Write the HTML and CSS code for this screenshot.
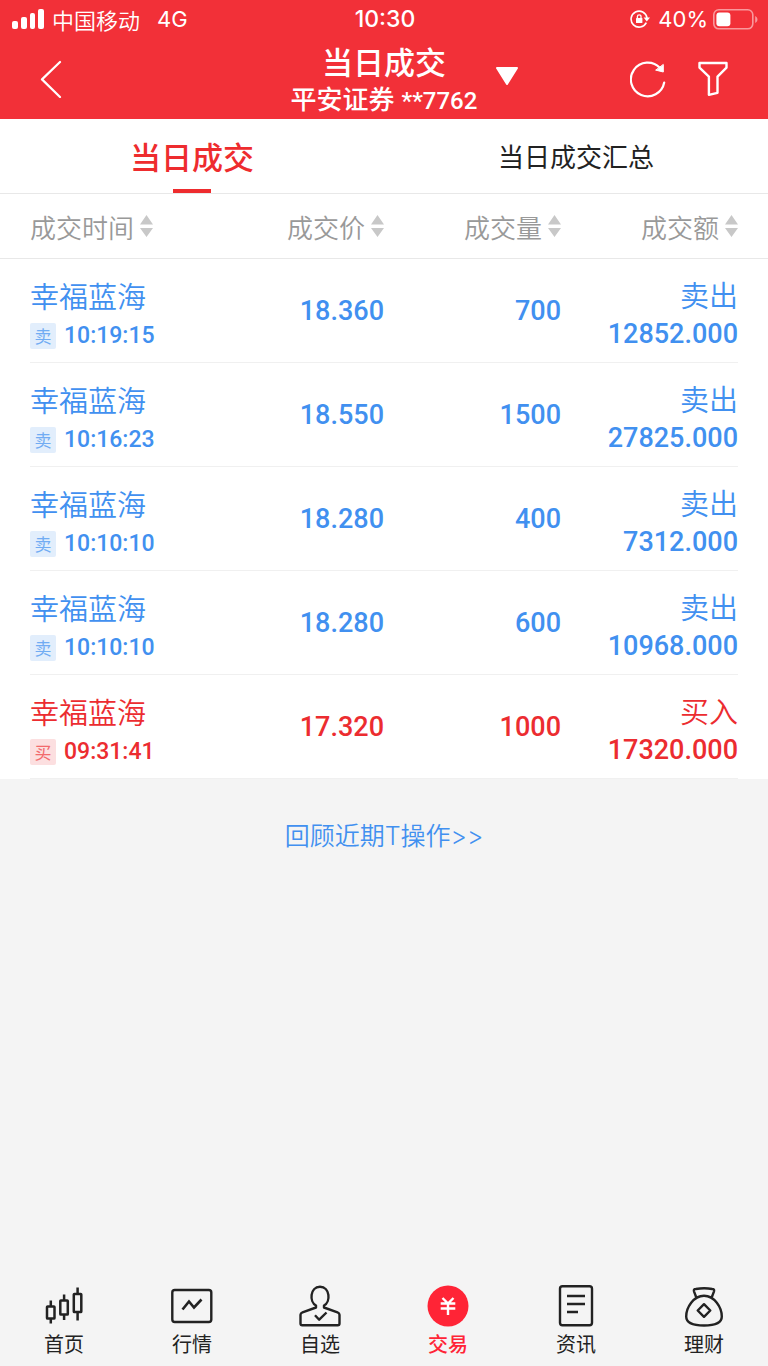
FILE: index.html
```html
<!DOCTYPE html>
<html lang="zh-CN">

<head>
    <meta charset="UTF-8">
    <meta name="viewport" content="width=device-width, initial-scale=1.0">
    <title>当日成交</title>
    <link rel="stylesheet" href="styles.css">
</head>

<body>
    <header class="header">
        <div class="status-bar">
            <div class="status-left">
                <svg width="32" height="20" viewBox="0 0 32 20" fill="#fff">
                    <rect x="0" y="12" width="6" height="8" rx="2" />
                    <rect x="9" y="8" width="6" height="12" rx="2" />
                    <rect x="18" y="4" width="5" height="16" rx="2" />
                    <rect x="26" y="0" width="6" height="20" rx="2" />
                </svg>
                <span class="carrier">中国移动</span>
                <span>4G</span>
            </div>
            <span class="clock">10:30</span>
            <div class="status-right">
                <svg width="20" height="18" viewBox="0 0 20 18" fill="none" stroke="#fff" stroke-width="1.6">
                    <path d="M16.3 12.6A8 8 0 1 1 17 8" />
                    <path d="M13.6 7.5h6.4l-3.2 4z" fill="#fff" stroke="none" />
                    <rect x="6" y="8" width="6.4" height="5" rx="0.6" fill="#fff" stroke="none" />
                    <path d="M7.4 8.4V6.6a1.8 1.8 0 0 1 3.6 0v1.8" stroke-width="1.3" />
                </svg>
                <span class="percent">40%</span>
                <svg width="45" height="21" viewBox="0 0 45 21">
                    <rect x="0.8" y="0.8" width="39" height="19" rx="5" fill="none" stroke="#fff" stroke-opacity="0.5" stroke-width="1.6" />
                    <rect x="3.4" y="3.4" width="14" height="13.8" rx="3" fill="#fff" />
                    <path d="M42.2 7c3 1.4 3 5.6 0 7z" fill="#fff" fill-opacity="0.5" />
                </svg>
            </div>
        </div>
        <nav class="navbar">
            <button class="back" aria-label="返回">
                <svg width="22" height="38" viewBox="0 0 22 38" fill="none" stroke="#fff" stroke-width="2.2" stroke-linecap="round" stroke-linejoin="round">
                    <path d="M20 2L2 19.4L20 37" />
                </svg>
            </button>
            <div class="nav-title">
                <h1>当日成交</h1>
                <p>平安证券 <span>**7762</span></p>
            </div>
            <div class="nav-right">
                <button class="dropdown" aria-label="切换账户">
                    <svg width="24" height="20" viewBox="0 0 24 20" fill="#fff" stroke="#fff" stroke-width="2" stroke-linejoin="round">
                        <path d="M2 2h20L12 18z" />
                    </svg>
                </button>
                <div class="nav-actions">
                    <button aria-label="刷新">
                        <svg width="36" height="38" viewBox="0 0 36 38" fill="none" stroke="#fff" stroke-width="2.2" stroke-linecap="round">
                            <path d="M34.2 22.5A16.8 16.8 0 1 1 30 8" />
                            <path d="M33.3 4.8V12L26 10.2z" fill="#fff" stroke-width="1" stroke-linejoin="round" />
                        </svg>
                    </button>
                    <button aria-label="筛选">
                        <svg width="30" height="36" viewBox="0 0 30 36" fill="none" stroke="#fff" stroke-width="2.4" stroke-linejoin="round">
                            <path d="M1.5 2h27v4.6l-9 9v16.2l-8.6 2V15.6L1.5 6.6z" />
                        </svg>
                    </button>
                </div>
            </div>
        </nav>
    </header>

    <div class="tabs" role="tablist">
        <button class="tab active" role="tab" aria-selected="true">当日成交</button>
        <button class="tab" role="tab" aria-selected="false">当日成交汇总</button>
    </div>

    <main>
        <table class="trades">
            <thead>
                <tr>
                    <th><button class="sort">成交时间<svg width="13" height="22" viewBox="0 0 13 22" fill="#c8c8c8"><path d="M6.5 0L13 9.5H0zM0 13h13L6.5 22z" /></svg></button></th>
                    <th><button class="sort">成交价<svg width="13" height="22" viewBox="0 0 13 22" fill="#c8c8c8"><path d="M6.5 0L13 9.5H0zM0 13h13L6.5 22z" /></svg></button></th>
                    <th><button class="sort">成交量<svg width="13" height="22" viewBox="0 0 13 22" fill="#c8c8c8"><path d="M6.5 0L13 9.5H0zM0 13h13L6.5 22z" /></svg></button></th>
                    <th><button class="sort">成交额<svg width="13" height="22" viewBox="0 0 13 22" fill="#c8c8c8"><path d="M6.5 0L13 9.5H0zM0 13h13L6.5 22z" /></svg></button></th>
                </tr>
            </thead>
            <tbody>
                <tr class="sell">
                    <td>
                        <div class="name">幸福蓝海</div>
                        <div class="time"><span class="badge">卖</span>10:19:15</div>
                    </td>
                    <td class="num">18.360</td>
                    <td class="num">700</td>
                    <td>
                        <div class="name">卖出</div>
                        <div class="num">12852.000</div>
                    </td>
                </tr>
                <tr class="sell">
                    <td>
                        <div class="name">幸福蓝海</div>
                        <div class="time"><span class="badge">卖</span>10:16:23</div>
                    </td>
                    <td class="num">18.550</td>
                    <td class="num">1500</td>
                    <td>
                        <div class="name">卖出</div>
                        <div class="num">27825.000</div>
                    </td>
                </tr>
                <tr class="sell">
                    <td>
                        <div class="name">幸福蓝海</div>
                        <div class="time"><span class="badge">卖</span>10:10:10</div>
                    </td>
                    <td class="num">18.280</td>
                    <td class="num">400</td>
                    <td>
                        <div class="name">卖出</div>
                        <div class="num">7312.000</div>
                    </td>
                </tr>
                <tr class="sell">
                    <td>
                        <div class="name">幸福蓝海</div>
                        <div class="time"><span class="badge">卖</span>10:10:10</div>
                    </td>
                    <td class="num">18.280</td>
                    <td class="num">600</td>
                    <td>
                        <div class="name">卖出</div>
                        <div class="num">10968.000</div>
                    </td>
                </tr>
                <tr class="buy">
                    <td>
                        <div class="name">幸福蓝海</div>
                        <div class="time"><span class="badge">买</span>09:31:41</div>
                    </td>
                    <td class="num">17.320</td>
                    <td class="num">1000</td>
                    <td>
                        <div class="name">买入</div>
                        <div class="num">17320.000</div>
                    </td>
                </tr>
            </tbody>
        </table>
        <a class="review-link" href="#">回顾近期T操作&gt;&gt;</a>
    </main>

    <!-- 底部导航 -->
    <nav class="tabbar">
        <a href="#">
            <svg width="42" height="42" viewBox="0 0 42 42" fill="none" stroke="#222" stroke-width="2.5" stroke-linejoin="round">
                <rect x="4" y="21.5" width="7.5" height="12" rx="0.6" />
                <path d="M7.8 15.5v6M7.8 33.5v5" />
                <rect x="17.3" y="15.5" width="7.5" height="14" rx="0.6" />
                <path d="M21.1 9.5v6M21.1 29.5V35" />
                <rect x="30.8" y="9" width="7.5" height="18" rx="0.6" />
                <path d="M34.6 2.5V9M34.6 27v8.5" />
            </svg>
            <span>首页</span>
        </a>
        <a href="#">
            <svg width="42" height="42" viewBox="0 0 42 42" fill="none" stroke="#222" stroke-width="2.4">
                <rect x="1.3" y="5" width="39" height="32" rx="2.5" />
                <path d="M11.5 24.5l6.5-8 5 6 7.5-8" stroke-width="2.6" />
            </svg>
            <span>行情</span>
        </a>
        <a href="#">
            <svg width="42" height="42" viewBox="0 0 42 42" fill="none" stroke="#222" stroke-width="2.4" stroke-linejoin="round">
                <path d="M17 22.5v-2C10.2 17 10.8 1.8 21 1.8S31.8 17 25 20.5v2l13.5 4.8c1.3.5 2 1.2 2 2.4v8.8c0 1.2-.7 1.8-1.8 1.8H3.3c-1.1 0-1.8-.6-1.8-1.8v-8.8c0-1.2.7-1.9 2-2.4z" />
                <path d="M16 30.2l4.2 4.5 7.3-7.2" />
            </svg>
            <span>自选</span>
        </a>
        <a href="#" class="current">
            <svg width="42" height="42" viewBox="0 0 42 42" fill="none" stroke="#fff" stroke-width="2.4">
                <circle cx="21" cy="21" r="20.5" fill="#ff2436" stroke="none" />
                <path d="M15.5 13l5.5 5.5 5.5-5.5M13.7 18.5h14.6M13.7 23.5h14.6M21 18v12" />
            </svg>
            <span>交易</span>
        </a>
        <a href="#">
            <svg width="42" height="42" viewBox="0 0 42 42" fill="none" stroke="#222" stroke-width="2.4">
                <rect x="5" y="1.3" width="32" height="39" rx="2.5" />
                <path d="M12 11h18M12 19h18M12 27h11" />
            </svg>
            <span>资讯</span>
        </a>
        <a href="#">
            <svg width="42" height="42" viewBox="0 0 42 42" fill="none" stroke="#222" stroke-width="2.4" stroke-linejoin="round">
                <path d="M13.3 12.5L11 6.3c-.5-1.5.3-2.3 1.8-2.3 5.7-1 11.2-1 16.4 0 1.5 0 2.3.8 1.8 2.3l-2.3 6.2" />
                <path d="M21 10.7C10.5 10.7 3.2 22.5 3.2 31.5c0 6.5 5.8 9 17.8 9s17.8-2.5 17.8-9C38.8 22.5 31.5 10.7 21 10.7z" />
                <path d="M21 19.2l6.3 6.3-6.3 6.3-6.3-6.3z" />
            </svg>
            <span>理财</span>
        </a>
    </nav>
</body>

</html>
```
FILE: styles.css
```css
* {
    box-sizing: border-box;
}

body {
    margin: 0;
    min-height: 100vh;
    display: flex;
    flex-direction: column;
    background-color: #f4f4f4;
    color: #222;
    font-family: Inter, "Noto Sans CJK SC", sans-serif;
}

button {
    padding: 0;
    border: none;
    background: none;
    color: inherit;
    font: inherit;
    cursor: pointer;
}

a {
    text-decoration: none;
}

svg {
    display: block;
    flex-shrink: 0;
}

/* 顶部 */
.header {
    background-color: #f23038;
    color: #fff;
}

.status-bar {
    display: grid;
    grid-template-columns: 1fr auto 1fr;
    align-items: center;
    height: 38px;
    padding: 0 10px 0 12px;
    font-size: 22px;
}

.status-left,
.status-right {
    display: flex;
    align-items: center;
}

.carrier {
    margin: 0 17px 0 8px;
    font-weight: 350;
}

.clock {
    font-size: 23px;
    font-weight: 500;
}

.status-right {
    justify-content: flex-end;
}

.percent {
    margin: 0 5px 0 8px;
}

.navbar {
    display: grid;
    grid-template-columns: 1fr auto 1fr;
    align-items: center;
    height: 81px;
    padding: 0 40px;
}

.back {
    justify-self: start;
}

.nav-title {
    padding-top: 6px;
    text-align: center;
}

.nav-title h1 {
    margin: 0;
    font-size: 31px;
    line-height: 38px;
    font-weight: 500;
}

.nav-title p {
    margin: 0;
    font-size: 26px;
    line-height: 36px;
    font-weight: 500;
}

.nav-title span {
    font-family: Roboto, sans-serif;
    font-size: 24px;
}

.nav-right {
    display: flex;
    align-items: center;
    justify-content: space-between;
    padding-left: 18px;
}

.dropdown {
    padding-bottom: 6px;
}

.nav-actions {
    display: flex;
    align-items: center;
    gap: 32px;
}

/* 标签页 */
.tabs {
    display: flex;
    height: 75px;
    background-color: #fff;
    border-bottom: 1px solid #e8e8e8;
}

.tab {
    flex: 1;
    padding-bottom: 2px;
    font-size: 26px;
}

.tab.active {
    color: #ee2c2e;
    font-size: 31px;
    font-weight: 500;
    background: linear-gradient(#ee2c2e, #ee2c2e) center bottom / 38px 4px no-repeat;
}

/* 成交列表 */
main {
    flex: 1;
}

.trades,
.trades thead,
.trades tbody {
    display: block;
}

.trades {
    background-color: #fff;
}

.trades tr {
    display: grid;
    grid-template-columns: repeat(4, 1fr);
    align-items: center;
}

.trades thead tr {
    height: 65px;
    padding: 0 30px;
    border-bottom: 1px solid #e8e8e8;
}

.trades tbody tr {
    height: 104px;
    margin: 0 30px;
    border-bottom: 1px solid #f0f0f0;
}

.trades th,
.trades td {
    padding: 0;
    text-align: right;
    font-weight: 400;
}

.trades th:first-child,
.trades td:first-child {
    text-align: left;
}

.trades td:first-child {
    padding-top: 12px;
}

.trades td:last-child {
    padding-top: 8px;
}

.sort {
    display: inline-flex;
    align-items: center;
    gap: 6px;
    color: #999;
    font-size: 26px;
    font-weight: 350;
}

.sell {
    color: #4190f0;
}

.buy {
    color: #ec2c30;
}

.name {
    font-size: 29px;
    line-height: 38px;
    font-weight: 350;
}

.trades .num {
    font-family: Roboto, sans-serif;
    font-size: 27px;
    line-height: 36px;
    font-weight: 500;
}

.time {
    display: flex;
    align-items: center;
    gap: 8px;
    font-family: Roboto, sans-serif;
    font-size: 23px;
    line-height: 38px;
    font-weight: 500;
}

.badge {
    width: 26px;
    border-radius: 2px;
    background-color: #e2eefc;
    color: #71acf3;
    font-family: "Noto Sans CJK SC", sans-serif;
    font-size: 17px;
    line-height: 26px;
    font-weight: 400;
    text-align: center;
}

.buy .badge {
    background-color: #fcdfe0;
    color: #f26a6d;
}

.review-link {
    display: block;
    margin-top: 39px;
    color: #4190f0;
    font-size: 25px;
    line-height: 36px;
    font-weight: 350;
    text-align: center;
}

/* 底部导航 */
.tabbar {
    display: flex;
    padding: 15px 0 6px;
}

.tabbar a {
    flex: 1;
    display: flex;
    flex-direction: column;
    align-items: center;
    gap: 3px;
    color: #222;
    font-size: 20px;
    line-height: 30px;
}

.tabbar .current {
    color: #ff2436;
    font-weight: 500;
}
```
